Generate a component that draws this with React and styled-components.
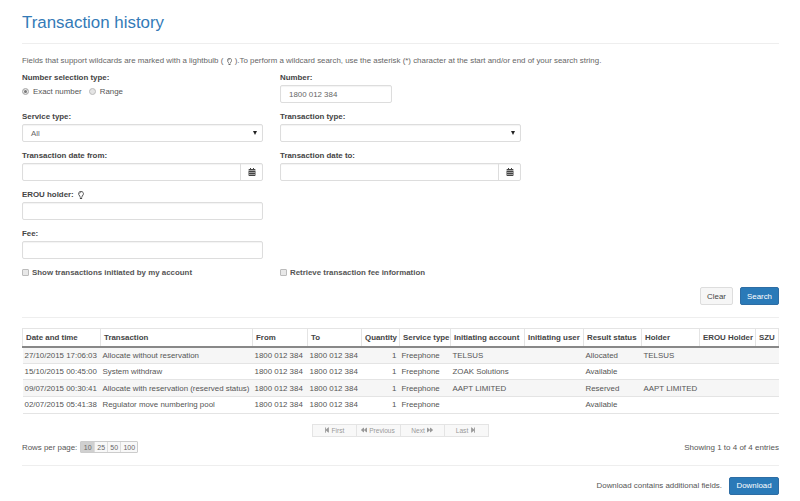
import React from "react";
import styled, { createGlobalStyle } from "styled-components";
import { FaRegLightbulb, FaCalendarAlt, FaStepBackward, FaBackward, FaForward, FaStepForward } from "react-icons/fa";

const Global = createGlobalStyle`
  html, body { margin: 0; padding: 0; background: #fff; }
  body { font-family: "Liberation Sans", Arial, sans-serif; font-size: 7.9px; color: #555; }
  * { box-sizing: border-box; }
`;
const Page = styled.div`
  width: 800px; height: 501px; overflow: hidden;
  padding: 0 21px 0 22px;
`;
const Title = styled.h1`
  margin: 0; height: 43px; padding-top: 11px;
  font-size: 16.9px; line-height: 23px; font-weight: 400; color: #337ab7;
`;
const Rule = styled.hr`
  margin: 0; border: 0; border-top: 1px solid #eee;
`;
const Help = styled.p`
  margin: 12px 0 0; height: 10px; line-height: 10px; font-size: 7.9px; color: #666;
  display: flex; align-items: center; white-space: pre;
`;
const Form = styled.div`
  margin-top: 4px;
  display: grid; grid-template-columns: 241px 241px; column-gap: 17px;
  grid-auto-rows: 39px;
`;
const Field = styled.div`
  display: flex; flex-direction: column; align-items: flex-start; padding-top: 2px;
`;
const Label = styled.label`
  font-weight: 700; font-size: 7.9px; line-height: 10px; height: 11px; color: #444;
  display: flex; align-items: center; gap: 3px;
`;
const Radios = styled.div`
  display: flex; align-items: center; height: 14px; margin-top: 1px; font-size: 7.9px; color: #555;
`;
const Radio = styled.span`
  width: 7px; height: 7px; border-radius: 50%; margin-right: 4px;
  border: 1px solid #bbb; background: ${p => (p.$on ? "#777" : "#e4e4e4")};
  box-shadow: ${p => (p.$on ? "inset 0 0 0 1px #eee" : "none")};
`;
const RadioText = styled.span`
  margin-right: 7px;
`;
const Control = styled.div`
  width: ${p => p.$w || "100%"}; height: 18px; margin-top: 2px;
  border: 1px solid #ddd; border-radius: 2px; background: #fff;
  box-shadow: inset 0 1px 1px rgba(0,0,0,.05);
  display: flex; align-items: center; padding-left: ${p => p.$pl || 8}px;
  font-size: 7.9px; color: #666;
`;
const SelectBox = styled(Control)`
  justify-content: space-between; padding-right: 4px;
`;
const Caret = styled.span`
  width: 0; height: 0; border-left: 2.5px solid transparent; border-right: 2.5px solid transparent;
  border-top: 4px solid #222; margin-right: 1px;
`;
const DateBox = styled(Control)`
  padding: 0; justify-content: flex-end;
`;
const Addon = styled.span`
  width: 22px; height: 100%; border-left: 1px solid #ddd; display: flex; align-items: center; justify-content: center;
  color: #444; font-size: 8px;
`;
const Checks = styled.div`
  display: grid; grid-template-columns: 241px 241px; column-gap: 17px; height: 12px; margin-top: 1px;
`;
const Check = styled.div`
  display: flex; align-items: center; font-weight: 700; color: #555; font-size: 7.9px; white-space: nowrap;
`;
const Box = styled.span`
  width: 7px; height: 7px; margin-right: 3px; border: 1px solid #bbb; border-radius: 1px; background: #e8e8e8;
`;
const Actions = styled.div`
  display: flex; justify-content: flex-end; align-items: flex-start; gap: 7px; margin-top: 9px; height: 19px; margin-bottom: 11px;
`;
const Button = styled.button`
  height: 18px; padding: 0; margin: 0; width: ${p => p.$w}px;
  font: 400 7.9px "Liberation Sans", Arial, sans-serif; border-radius: 2px;
  border: 1px solid ${p => (p.$primary ? "#2e6da4" : "#ddd")};
  background: ${p => (p.$primary ? "#2a7ab8" : "#f6f6f6")};
  color: ${p => (p.$primary ? "#fff" : "#444")};
`;
const Table = styled.table`
  margin-top: 10px; width: 756px; table-layout: fixed; border-collapse: collapse; font-size: 7.9px; color: #555;
`;
const Th = styled.th`
  height: 18px; padding: 0 0 0 3px; text-align: left; font-weight: 700; font-size: 7.9px; color: #444; white-space: nowrap; overflow: hidden;
  border: 1px solid #e4e4e4; border-bottom: 2px solid #888;
`;
const Tr = styled.tr`
  background: ${p => (p.$odd ? "#f6f6f6" : "#fff")};
  border-bottom: 1px solid #e4e4e4;
`;
const Td = styled.td`
  height: 16.67px; padding: 0 3px 0 2px; white-space: nowrap; overflow: hidden;
  text-align: ${p => (p.$right ? "right" : "left")};
`;
const Pager = styled.div`
  margin-top: 10px; height: 13px; display: flex; justify-content: center; padding-right: 0;
`;
const PageBtn = styled.span`
  width: 45px; height: 13px; margin-left: -1px; border: 1px solid #e4e4e4; background: #f8f8f8; color: #999;
  display: flex; align-items: center; justify-content: center; gap: 2px; font-size: 6.6px;
`;
const Foot = styled.div`
  margin-top: 4px; height: 13px; display: flex; align-items: center; justify-content: space-between; margin-bottom: 11px;
`;
const Rows = styled.div`
  display: flex; align-items: center; gap: 3px; font-size: 7.9px; color: #555;
`;
const Sizes = styled.div`
  display: flex; border: 1px solid #ccc; border-radius: 1px; height: 12px;
`;
const Size = styled.span`
  width: ${p => p.$w || 13}px; display: flex; align-items: center; justify-content: center; font-size: 7px; color: #666;
  background: ${p => (p.$on ? "#d0d0d0" : "#f8f8f8")};
  border-left: ${p => (p.$first ? "0" : "1px solid #ddd")};
`;
const Info = styled.span`
  font-size: 8px; color: #555;
`;
const Download = styled.div`
  margin-top: 11px; display: flex; justify-content: flex-end; align-items: center; gap: 7px; font-size: 7.9px; color: #555;
`;
const Col = styled.col`
  width: ${p => p.$w}px;
`;

const widths = [78, 152, 55, 54, 38, 51, 74, 59, 58, 58, 56, 23];
const heads = ["Date and time", "Transaction", "From", "To", "Quantity", "Service type", "Initiating account", "Initiating user", "Result status", "Holder", "EROU Holder", "SZU"];
const rows = [
  ["27/10/2015 17:06:03", "Allocate without reservation", "TELSUS", "Allocated", "TELSUS"],
  ["15/10/2015 00:45:00", "System withdraw", "ZOAK Solutions", "Available", ""],
  ["09/07/2015 00:30:41", "Allocate with reservation (reserved status)", "AAPT LIMITED", "Reserved", "AAPT LIMITED"],
  ["02/07/2015 05:41:38", "Regulator move numbering pool", "", "Available", ""],
];

export default function App() {
  return (
    <Page>
      <Global />
      <Title>Transaction history</Title>
      <Rule />
      <Help>Fields that support wildcards are marked with a lightbulb ( <FaRegLightbulb size={7} /> ).To perform a wildcard search, use the asterisk (*) character at the start and/or end of your search string.</Help>
      <Form>
        <Field>
          <Label>Number selection type:</Label>
          <Radios><Radio $on /><RadioText>Exact number</RadioText><Radio /><RadioText>Range</RadioText></Radios>
        </Field>
        <Field><Label>Number:</Label><Control $w="112px">1800 012 384</Control></Field>
        <Field><Label>Service type:</Label><SelectBox>All<Caret /></SelectBox></Field>
        <Field><Label>Transaction type:</Label><SelectBox><span /><Caret /></SelectBox></Field>
        <Field><Label>Transaction date from:</Label><DateBox><Addon><FaCalendarAlt /></Addon></DateBox></Field>
        <Field><Label>Transaction date to:</Label><DateBox><Addon><FaCalendarAlt /></Addon></DateBox></Field>
        <Field><Label>EROU holder: <FaRegLightbulb size={8} /></Label><Control /></Field>
        <span />
        <Field><Label>Fee:</Label><Control /></Field>
        <span />
      </Form>
      <Checks>
        <Check><Box />Show transactions initiated by my account</Check>
        <Check><Box />Retrieve transaction fee information</Check>
      </Checks>
      <Actions><Button $w={33}>Clear</Button><Button $w={39} $primary>Search</Button></Actions>
      <Rule />
      <Table>
        <colgroup>{widths.map((w, i) => <Col key={i} $w={w} />)}</colgroup>
        <thead><tr>{heads.map(h => <Th key={h}>{h}</Th>)}</tr></thead>
        <tbody>
          {rows.map((r, i) => (
            <Tr key={r[0]} $odd={i % 2 === 0}>
              <Td>{r[0]}</Td><Td>{r[1]}</Td><Td>1800 012 384</Td><Td>1800 012 384</Td><Td $right>1</Td><Td>Freephone</Td>
              <Td>{r[2]}</Td><Td /><Td>{r[3]}</Td><Td>{r[4]}</Td><Td /><Td />
            </Tr>
          ))}
        </tbody>
      </Table>
      <Pager>
        <PageBtn><FaStepBackward size={6} /> First</PageBtn>
        <PageBtn><FaBackward size={6} /> Previous</PageBtn>
        <PageBtn>Next <FaForward size={6} /></PageBtn>
        <PageBtn>Last <FaStepForward size={6} /></PageBtn>
      </Pager>
      <Foot>
        <Rows>Rows per page:
          <Sizes><Size $on $first>10</Size><Size>25</Size><Size>50</Size><Size $w={17}>100</Size></Sizes>
        </Rows>
        <Info>Showing 1 to 4 of 4 entries</Info>
      </Foot>
      <Rule />
      <Download>Download contains additional fields.<Button $w={50} $primary>Download</Button></Download>
    </Page>
  );
}
